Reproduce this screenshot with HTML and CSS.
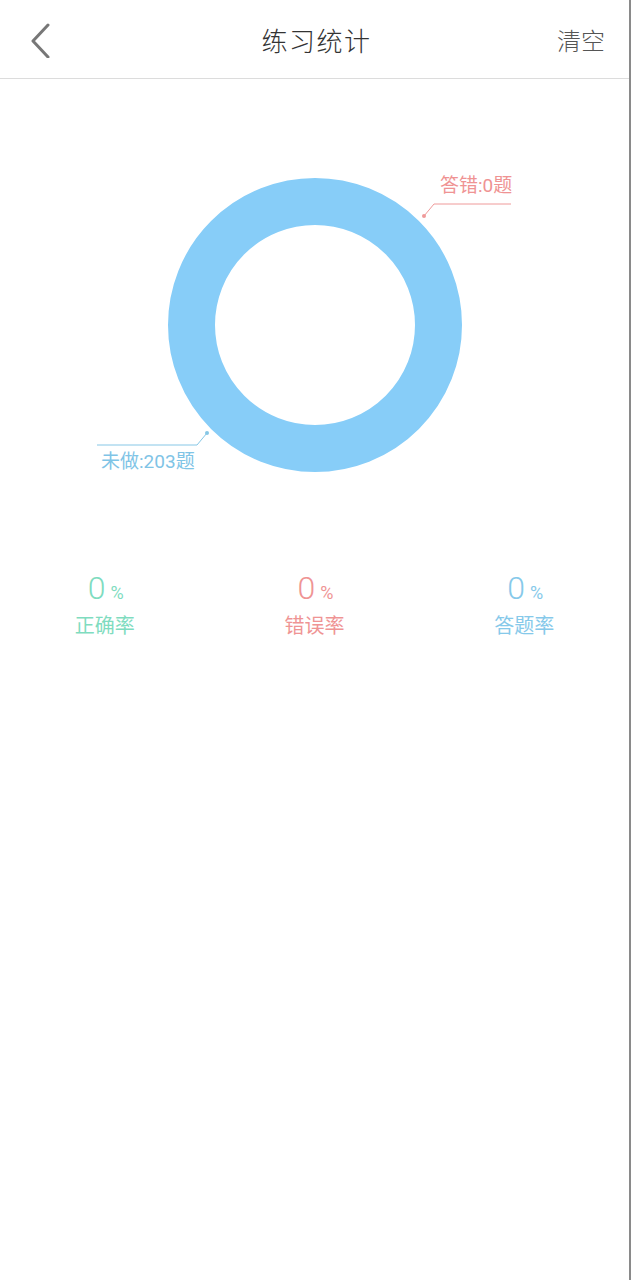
FILE: index.html
```html
<!DOCTYPE html>
<html lang="zh">
<head>
<meta charset="utf-8">
<title>练习统计</title>
<link rel="stylesheet" href="styles.css">
</head>
<body>
<div class="page">
  <header class="topbar">
    <div class="back">
      <svg width="24" height="36" viewBox="0 0 24 36"><polyline points="20,3 5,19 20,35" fill="none" stroke="#777" stroke-width="3" stroke-linecap="round" stroke-linejoin="round"/></svg>
    </div>
    <h1 class="title">练习统计</h1>
    <div class="clear">清空</div>
  </header>
  <section class="chart">
    <svg width="629" height="470" viewBox="0 0 629 470">
      <circle cx="315" cy="246" r="123.5" fill="none" stroke="#87cdf8" stroke-width="47"/>
      <polyline points="424,137 434,125 511,125" fill="none" stroke="#ef9a9a" stroke-width="1"/>
      <circle cx="424" cy="137" r="2" fill="#ef9a9a"/>
      <text x="440" y="113" class="lbl lbl-wrong">答错:0题</text>
      <polyline points="207,354 197,366 97,366" fill="none" stroke="#86c7e6" stroke-width="1"/>
      <circle cx="207" cy="354" r="2" fill="#86c7e6"/>
      <text x="101" y="389" class="lbl lbl-todo">未做:203题</text>
    </svg>
  </section>
  <section class="stats">
    <div class="stat green">
      <div class="val"><span class="num">0</span><span class="pct">%</span></div>
      <div class="name">正确率</div>
    </div>
    <div class="stat red">
      <div class="val"><span class="num">0</span><span class="pct">%</span></div>
      <div class="name">错误率</div>
    </div>
    <div class="stat blue">
      <div class="val"><span class="num">0</span><span class="pct">%</span></div>
      <div class="name">答题率</div>
    </div>
  </section>
</div>
</body>
</html>
```
FILE: styles.css
```css
* { box-sizing: border-box; }
html, body { margin: 0; padding: 0; background: #fff; }
body { font-family: "Noto Sans CJK SC", "Noto Sans", sans-serif; }
.page {
  width: 631px;
  min-height: 1280px;
  border-right: 2px solid #8a8a8a;
}
.topbar {
  height: 79px;
  border-bottom: 1px solid #dcdcdc;
  display: flex;
  align-items: center;
  justify-content: space-between;
  padding: 0 24px 0 28px;
}
.back { display: flex; align-items: center; width: 60px; padding-top: 2px; }
.title {
  margin: 0;
  font-size: 26px;
  font-weight: 300;
  color: #333;
  letter-spacing: 1.5px;
}
.clear {
  width: 60px;
  text-align: right;
  font-size: 24px;
  font-weight: 300;
  color: #555;
}
.chart { height: 470px; }
.chart svg { display: block; }
.lbl { font-family: Roboto, "Noto Sans CJK SC", sans-serif; font-size: 19px; }
.lbl-wrong { fill: #ef9393; }
.lbl-todo { fill: #7fc4e6; }
.stats {
  display: grid;
  grid-template-columns: repeat(3, 1fr);
  padding-top: 20px;
}
.stat { display: flex; flex-direction: column; align-items: center; }
.val { line-height: 38px; height: 38px; padding-left: 2px; }
.num { font-family: Roboto, "Noto Sans", sans-serif; font-size: 32px; font-weight: 300; }
.pct { font-family: Roboto, "Noto Sans", sans-serif; font-size: 18px; margin-left: 5px; }
.name { font-size: 20px; line-height: 28px; margin-top: 4px; }
.green { color: #7fdcc0; }
.red { color: #ef9494; }
.blue { color: #86c9ea; }
```
